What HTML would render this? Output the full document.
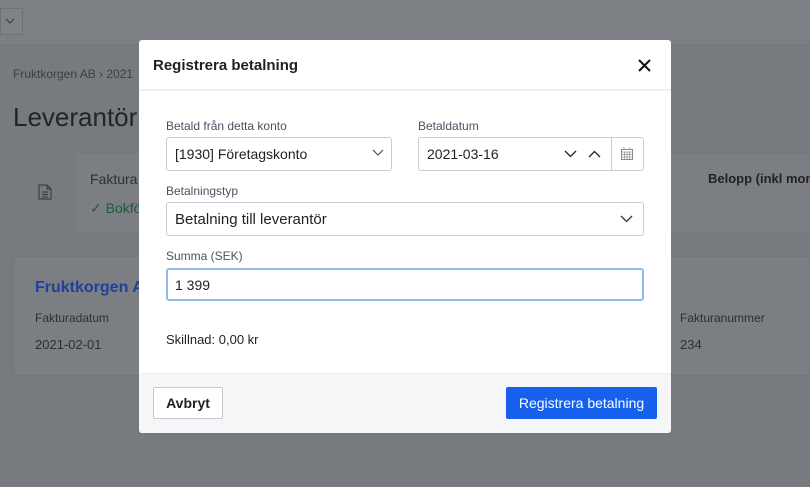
<!DOCTYPE html>
<html><head><meta charset="utf-8"><style>
*{box-sizing:border-box;margin:0;padding:0}
body{width:810px;height:487px;overflow:hidden;background:#777a7f;font-family:"Liberation Sans",sans-serif;position:relative;color:#222}
.abs{position:absolute;white-space:nowrap}
.modal{position:absolute;left:139px;top:40px;width:532px;height:393px;background:#fff;border-radius:3px;overflow:hidden}
.lbl{position:absolute;font-size:12px;color:#4a5260}
.fld{position:absolute;border:1px solid #c9ccd1;border-radius:3px;background:#fff;font-size:14px;color:#222;padding-left:8px;display:flex;align-items:center;white-space:nowrap}
</style></head><body>
<div class="abs" style="left:0;top:0;width:810px;height:45px;background:#7c7f84;border-bottom:1px solid #74777b"></div>
<div class="abs" style="left:0;top:8px;width:23px;height:27px;border:1px solid #6e7175;background:#7f8287"></div>
<svg class="abs" style="left:5px;top:17px" width="10" height="8"><path d="M1 2l4 4 4-4" stroke="#3a3c40" fill="none"/></svg>
<div class="abs" style="left:13px;top:67px;font-size:12px;color:#3c3f44">Fruktkorgen AB › 2021</div>
<div class="abs" style="left:13px;top:102px;font-size:26px;color:#222428">Leverantör</div>
<div class="abs" style="left:75px;top:153px;width:740px;height:80px;background:#7b7e83;border:1px solid #74777b"></div>
<svg class="abs" style="left:38px;top:184px" width="14" height="16"><path d="M1 1h8l4 4v10H1z M9 1v4h4 M4 8h6 M4 10.5h6 M4 13h6" stroke="#333" fill="none"/></svg>
<div class="abs" style="left:90px;top:171px;font-size:14px;color:#2d2f33">Faktura</div>
<div class="abs" style="left:90px;top:200px;font-size:14px;color:#1f5a3a">✓ Bokfö</div>
<div class="abs" style="left:708px;top:171px;font-size:13px;color:#222;font-weight:bold">Belopp (inkl moms)</div>
<div class="abs" style="left:13px;top:256px;width:800px;height:120px;background:#7b7e83;border:1px solid #74777b"></div>
<div class="abs" style="left:35px;top:279px;font-size:16px;color:#22409a;font-weight:bold">Fruktkorgen AB</div>
<div class="abs" style="left:35px;top:311px;font-size:12px;color:#2d2f33">Fakturadatum</div>
<div class="abs" style="left:35px;top:337px;font-size:13px;color:#2d2f33">2021-02-01</div>
<div class="abs" style="left:680px;top:311px;font-size:12px;color:#2d2f33">Fakturanummer</div>
<div class="abs" style="left:680px;top:337px;font-size:13px;color:#2d2f33">234</div>

<div class="modal">
 <div class="abs" style="left:14px;top:17px;font-size:15px;font-weight:bold;color:#222">Registrera betalning</div>
 <svg class="abs" style="left:499px;top:19px" width="13" height="13"><path d="M1 1l11 11M12 1L1 12" stroke="#111" stroke-width="2"/></svg>
 <div class="abs" style="left:0;top:49px;width:532px;height:2px;background:#eef0f2"></div>
 <div class="lbl" style="left:27px;top:79px">Betald från detta konto</div>
 <div class="fld" style="left:27px;top:97px;width:226px;height:34px">[1930] Företagskonto</div>
 <svg class="abs" style="left:233px;top:109px" width="12" height="8"><path d="M1 1l5 5 5-5" stroke="#444" fill="none"/></svg>
 <div class="lbl" style="left:279px;top:79px">Betaldatum</div>
 <div class="fld" style="left:279px;top:97px;width:226px;height:34px">2021-03-16</div>
 <div class="abs" style="left:472px;top:98px;width:1px;height:32px;background:#c9ccd1"></div>
 <svg class="abs" style="left:425px;top:110px" width="13" height="8"><path d="M1 1l5.5 5.5L12 1" stroke="#222" stroke-width="1.3" fill="none"/></svg>
 <svg class="abs" style="left:449px;top:110px" width="13" height="8"><path d="M1 7l5.5-5.5L12 7" stroke="#222" stroke-width="1.3" fill="none"/></svg>
 <svg class="abs" style="left:482px;top:107px" width="12" height="13"><rect x="0.5" y="2.5" width="11" height="10" fill="none" stroke="#888"/><path d="M0.5 5h11M3 0v3M9 0v3M0.5 7.5h11M0.5 10h11M3.5 5v7M6 5v7M8.5 5v7" stroke="#999" stroke-width=".8"/></svg>
 <div class="lbl" style="left:27px;top:144px">Betalningstyp</div>
 <div class="fld" style="left:27px;top:162px;width:478px;height:34px;font-size:15px">Betalning till leverantör</div>
 <svg class="abs" style="left:481px;top:175px" width="13" height="8"><path d="M1 1l5.5 5.5L12 1" stroke="#333" stroke-width="1.3" fill="none"/></svg>
 <div class="lbl" style="left:27px;top:209px">Summa (SEK)</div>
 <div class="fld" style="left:27px;top:228px;width:478px;height:33px;border:2px solid #8fbaea;padding-left:7px">1 399</div>
 <div class="abs" style="left:27px;top:292px;font-size:13px;color:#222">Skillnad: 0,00 kr</div>
 <div class="abs" style="left:0;top:333px;width:532px;height:60px;background:#f5f6f8;border-top:1px solid #eceef0"></div>
 <div class="abs" style="left:14px;top:347px;width:70px;height:32px;border:1px solid #c5c8cc;border-radius:2px;background:#fff;font-size:14px;font-weight:bold;display:flex;align-items:center;justify-content:center">Avbryt</div>
 <div class="abs" style="left:367px;top:347px;width:151px;height:32px;border-radius:2px;background:#1561ee;color:#fff;font-size:14px;display:flex;align-items:center;justify-content:center">Registrera betalning</div>
</div>
</body></html>
